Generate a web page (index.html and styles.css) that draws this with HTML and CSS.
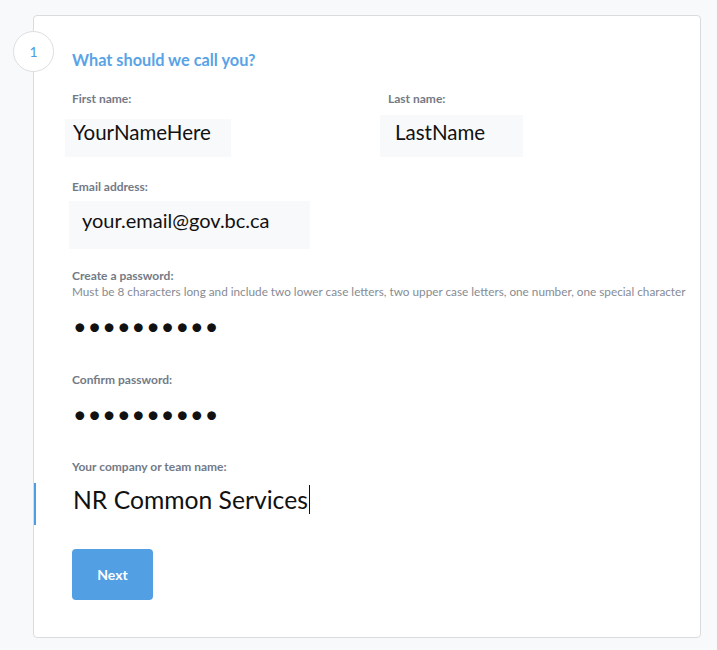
FILE: index.html
```html
<!DOCTYPE html>
<html lang="en">
<head>
<meta charset="utf-8">
<title>What should we call you?</title>
<link rel="stylesheet" href="styles.css">
</head>
<body>
<main class="page">
  <section class="card">
    <div class="step-badge">1</div>
    <h2 class="step-title">What should we call you?</h2>
    <form class="form">
      <div class="name-row">
        <div class="field">
          <label class="label" for="first">First name:</label>
          <input class="input input-first" id="first" type="text" value="YourNameHere">
        </div>
        <div class="field">
          <label class="label" for="last">Last name:</label>
          <input class="input input-last" id="last" type="text" value="LastName">
        </div>
      </div>
      <div class="field field-email">
        <label class="label" for="email">Email address:</label>
        <input class="input input-email" id="email" type="text" value="your.email@gov.bc.ca">
      </div>
      <div class="field field-password">
        <label class="label" for="pw">Create a password:</label>
        <p class="hint">Must be 8 characters long and include two lower case letters, two upper case letters, one number, one special character</p>
        <input class="input input-password" id="pw" type="password" value="abcdefghij">
      </div>
      <div class="field field-confirm">
        <label class="label" for="pw2">Confirm password:</label>
        <input class="input input-password" id="pw2" type="password" value="abcdefghij">
      </div>
      <div class="field field-company">
        <label class="label" for="company">Your company or team name:</label>
        <div class="focus-bar">
          <input class="input input-company" id="company" type="text" value="NR Common Services"><span class="caret"></span>
        </div>
      </div>
      <button class="btn-next" type="button">Next</button>
    </form>
  </section>
</main>
</body>
</html>
```
FILE: styles.css
```css
* { box-sizing: border-box; }
html, body { margin: 0; padding: 0; }
body {
  background: #f8f9fb;
  font-family: Lato, "Open Sans", sans-serif;
  width: 717px;
  height: 650px;
  overflow: hidden;
}
.page { padding: 15px 0 0 33px; }
.card {
  position: relative;
  width: 668px;
  height: 623px;
  background: #ffffff;
  border: 1px solid #d9dbde;
  border-radius: 4px;
  padding: 34px 10px 0 38px;
}
.step-badge {
  position: absolute;
  left: -21px;
  top: 15px;
  width: 41px;
  height: 41px;
  border-radius: 50%;
  background: #fff;
  border: 1px solid #dcdee1;
  color: #4f9de2;
  font-size: 14px;
  display: flex;
  align-items: center;
  justify-content: center;
}
.step-title {
  margin: 0;
  font-size: 16.3px;
  line-height: 19px;
  font-weight: 700;
  color: #59a3e6;
}
.form { display: flex; flex-direction: column; align-items: flex-start; }
.name-row {
  margin-top: 23px;
  display: grid;
  grid-template-columns: 316px 200px;
}
.field { display: flex; flex-direction: column; align-items: flex-start; }
.label {
  font-size: 12px;
  line-height: 14px;
  font-weight: 700;
  color: #737a86;
}
.hint {
  margin: 1px 0 0;
  font-size: 11.75px;
  line-height: 15px;
  color: #868b93;
  white-space: nowrap;
}
.input {
  border: 0;
  outline: none;
  background: #f8f9fb;
  font-family: Lato, "Open Sans", sans-serif;
  color: #111;
  margin: 0;
}
.input-first {
  margin-top: 13px;
  margin-left: -7px;
  width: 166px;
  height: 38px;
  padding: 0 8px 13px;
  font-size: 20.5px;
}
.input-last {
  margin-top: 9px;
  margin-left: -8px;
  width: 143px;
  height: 42px;
  padding: 4px 15px 13px;
  font-size: 20.5px;
}
.field-email { margin-top: 23px; }
.input-email {
  margin-top: 7px;
  margin-left: -3px;
  width: 241px;
  height: 48px;
  padding: 7px 13px 17px;
  font-size: 20px;
}
.field-password { margin-top: 20px; }
.input-password {
  background: transparent;
  margin-top: 9px;
  width: 300px;
  height: 36px;
  padding: 0 0 0 1px;
  font-size: 23.5px;
  letter-spacing: 1px;
}
.field-confirm { margin-top: 29px; }
.field-company { margin-top: 28px; }
.focus-bar {
  margin-top: 9px;
  margin-left: -38px;
  padding-left: 37px;
  border-left: 2px solid #4f9de2;
  height: 42px;
  display: flex;
  align-items: flex-start;
}
.input-company {
  background: transparent;
  width: 236px;
  height: 42px;
  padding: 1px 0 11px 0;
  font-size: 24.7px;
}
.caret {
  display: block;
  width: 1px;
  height: 29px;
  margin-top: 2px;
  background: #111;
}
.btn-next {
  margin-top: 24px;
  width: 81px;
  height: 51px;
  border: 0;
  border-radius: 4px;
  background: #52a0e3;
  color: #fff;
  font-family: Lato, "Open Sans", sans-serif;
  font-size: 14px;
  font-weight: 700;
}
```
